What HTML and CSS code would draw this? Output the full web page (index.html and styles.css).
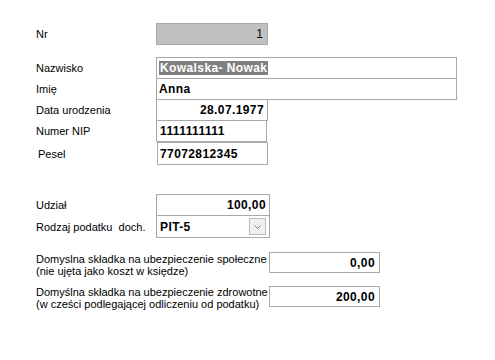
FILE: index.html
```html
<!DOCTYPE html>
<html lang="pl">
<head>
<meta charset="utf-8">
<title>Dane osoby</title>
<link rel="stylesheet" href="styles.css">
</head>
<body>
<div class="form">
  <div class="row nr-row">
    <span class="lbl">Nr</span>
    <div class="box nr">1</div>
  </div>

  <div class="group personal">
    <div class="row">
      <span class="lbl">Nazwisko</span>
      <div class="box wide"><span class="sel">Kowalska- Nowak</span></div>
    </div>
    <div class="row stacked">
      <span class="lbl">Imię</span>
      <div class="box wide">Anna</div>
    </div>
    <div class="row stacked">
      <span class="lbl">Data urodzenia</span>
      <div class="box mid right">28.07.1977</div>
    </div>
    <div class="row stacked">
      <span class="lbl">Numer NIP</span>
      <div class="box mid nip">1111111111</div>
    </div>
    <div class="row pesel-row">
      <span class="lbl pesel-lbl">Pesel</span>
      <div class="box mid pesel">77072812345</div>
    </div>
  </div>

  <div class="group tax">
    <div class="row">
      <span class="lbl">Udział</span>
      <div class="box share right">100,00</div>
    </div>
    <div class="row stacked">
      <span class="lbl">Rodzaj podatku&nbsp; doch.</span>
      <div class="box share combo">
        <span class="combo-val">PIT-5</span>
        <span class="combo-btn"><svg width="9" height="6" viewBox="0 0 9 6"><path d="M1.5 1.5l3 3 3-3" fill="none" stroke="#7a7a7a" stroke-width="1"/></svg></span>
      </div>
    </div>
  </div>

  <div class="group contrib">
    <div class="row top">
      <span class="lbl long first-long">Domyslna składka na ubezpieczenie społeczne<br>(nie ujęta jako koszt w księdze)</span>
      <div class="box small right">0,00</div>
    </div>
    <div class="row top second">
      <span class="lbl long">Domyślna składka na ubezpieczenie zdrowotne<br>(w cześci podlegającej odliczeniu od podatku)</span>
      <div class="box small right">200,00</div>
    </div>
  </div>
</div>
</body>
</html>
```

FILE: styles.css
```css
* { box-sizing: border-box; }

html, body {
  margin: 0;
  padding: 0;
  background: #ffffff;
}

body {
  font-family: "Liberation Sans", Arial, sans-serif;
  font-size: 11px;
  color: #000000;
}

.form {
  padding: 23px 0 0 36px;
  display: flex;
  flex-direction: column;
}

.row {
  display: flex;
  align-items: center;
}

.row.top {
  align-items: flex-start;
}

.lbl {
  width: 120px;
  flex: none;
  line-height: 12px;
  white-space: nowrap;
}

.lbl.long {
  width: 233px;
}

.first-long {
  padding-top: 1px;
}

.pesel-lbl {
  padding-left: 2px;
}

.box {
  border: 1px solid #a9a9a9;
  background: #ffffff;
  height: 22px;
  display: flex;
  align-items: center;
  padding: 0 3px 0 2px;
  font-weight: bold;
  font-size: 12px;
  letter-spacing: 0.4px;
  white-space: nowrap;
}

.box.right {
  justify-content: flex-end;
}

.stacked {
  margin-top: -1px;
}

.nr-row .box.nr {
  width: 112px;
  height: 22px;
  background: #c0c0c0;
  border-color: #a2aab6;
  justify-content: flex-end;
  font-weight: normal;
  font-size: 12px;
  letter-spacing: 0;
  padding-right: 4px;
}

.personal {
  margin-top: 12px;
}

.wide {
  width: 301px;
}

.mid {
  width: 112px;
}

.nip {
  width: 111px;
  padding-left: 3px;
}

.pesel {
  width: 111px;
  height: 23px;
  margin-left: 1px;
}

.sel {
  background: #808080;
  color: #ffffff;
  line-height: 14px;
  padding: 0 1px;
}

.tax {
  margin-top: 29px;
}

.share {
  width: 114px;
  height: 22px;
}

.tax .stacked .share {
  height: 23px;
}

.combo {
  padding-right: 3px;
  padding-left: 3px;
}

.combo-val {
  flex: 1;
}

.combo-btn {
  width: 17px;
  height: 17px;
  border: 1px solid #bcbcbc;
  background: #f0f0f0;
  display: flex;
  align-items: center;
  justify-content: center;
}

.contrib {
  margin-top: 14px;
}

.small {
  width: 111px;
  height: 21px;
  padding-right: 4px;
}

.second {
  margin-top: 9px;
}
```
